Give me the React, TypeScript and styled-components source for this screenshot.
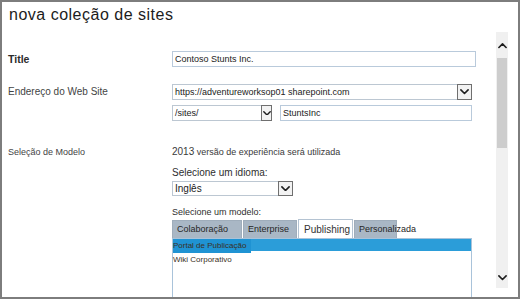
import React from 'react';
import styled, { createGlobalStyle } from 'styled-components';

const GlobalStyle = createGlobalStyle`
  html, body {
    margin: 0;
    padding: 0;
    background: #ffffff;
  }
  body {
    font-family: "Liberation Sans", Arial, sans-serif;
    color: #444;
  }
`;

const Chevron = ({ up = false, size = 9 }: { up?: boolean; size?: number }) => (
  <svg width={size} height={size * 0.6} viewBox="0 0 10 6">
    <path
      d={up ? 'M1 5 L5 1 L9 5' : 'M1 1 L5 5 L9 1'}
      fill="none"
      stroke="#1e1e1e"
      strokeWidth="1.8"
      strokeLinecap="round"
      strokeLinejoin="round"
    />
  </svg>
);

function App() {
  return (
    <>
      <GlobalStyle />
      <Frame>
        <Heading>nova coleção de sites</Heading>
        <Body>
          <Form>
            <Row top={19}>
              <Label bold>Title</Label>
              <Fields>
                <TextBox width={304}>Contoso Stunts Inc.</TextBox>
              </Fields>
            </Row>

            <Row top={17}>
              <Label>Endereço do Web Site</Label>
              <Fields>
                <Select width={300}>
                  <SelectText>https://adventureworksop01 sharepoint.com</SelectText>
                  <DropButton size={15}>
                    <Chevron />
                  </DropButton>
                </Select>
                <InlineRow>
                  <Select width={100}>
                    <SelectText>/sites/</SelectText>
                    <DropButton size={11}>
                      <Chevron size={8} />
                    </DropButton>
                  </Select>
                  <TextBox width={192}>StuntsInc</TextBox>
                </InlineRow>
              </Fields>
            </Row>

            <Row top={23}>
              <Label small>Seleção de Modelo</Label>
              <Fields>
                <Version>
                  <Year>2013</Year> versão de experiência será utilizada
                </Version>
                <FieldCaption top={6}>Selecione um idioma:</FieldCaption>
                <Select width={121} height={15} top={1}>
                  <SelectText big>Inglês</SelectText>
                  <DropButton size={15}>
                    <Chevron />
                  </DropButton>
                </Select>
                <FieldCaption top={9} small>
                  Selecione um modelo:
                </FieldCaption>
                <Tabs>
                  <Tab width={70}>Colaboração</Tab>
                  <Tab width={54}>Enterprise</Tab>
                  <Tab width={55} active>
                    Publishing
                  </Tab>
                  <Tab width={43}>Personalizada</Tab>
                </Tabs>
                <ListBox>
                  <ListItem selected>
                    <ItemText selected>Portal de Publicação</ItemText>
                  </ListItem>
                  <ListItem>
                    <ItemText>Wiki Corporativo</ItemText>
                  </ListItem>
                </ListBox>
              </Fields>
            </Row>
          </Form>

          <ScrollBar>
            <ScrollButton>
              <Chevron up />
            </ScrollButton>
            <Thumb />
            <Track />
            <ScrollButton>
              <Chevron />
            </ScrollButton>
          </ScrollBar>
        </Body>
      </Frame>
    </>
  );
}

const Frame = styled.div`
  width: 520px;
  height: 299px;
  box-sizing: border-box;
  border: 2px solid #7d7d7d;
  background: #fff;
  overflow: hidden;
  display: flex;
  flex-direction: column;
`;

const Heading = styled.h1`
  margin: 0;
  height: 30px;
  box-sizing: border-box;
  padding: 3px 0 0 7px;
  font-size: 16px;
  line-height: 20px;
  font-weight: normal;
  letter-spacing: 0.5px;
  color: #1c1c1c;
`;

const Body = styled.div`
  flex: 1;
  display: flex;
  overflow: hidden;
`;

const Form = styled.div`
  flex: 1;
  padding-left: 6px;
  overflow: hidden;
`;

const Row = styled.div<{ top: number }>`
  display: flex;
  align-items: flex-start;
  margin-top: ${(p) => p.top}px;
`;

const Label = styled.div<{ bold?: boolean; small?: boolean }>`
  width: 164px;
  flex-shrink: 0;
  font-size: ${(p) => (p.bold ? 10.5 : p.small ? 9 : 10)}px;
  font-weight: ${(p) => (p.bold ? 'bold' : 'normal')};
  line-height: 16px;
  color: ${(p) => (p.bold ? '#2b2b2b' : '#444')};
`;

const Fields = styled.div`
  width: 304px;
  display: flex;
  flex-direction: column;
  align-items: flex-start;
`;

const TextBox = styled.div<{ width: number }>`
  width: ${(p) => p.width}px;
  height: 16px;
  box-sizing: border-box;
  border: 1px solid #b9cadb;
  padding: 0 2px;
  font-size: 9px;
  line-height: 14px;
  color: #222;
  white-space: nowrap;
`;

const InlineRow = styled.div`
  display: flex;
  gap: 8px;
  margin-top: 5px;
`;

const Select = styled.div<{ width: number; height?: number; top?: number }>`
  width: ${(p) => p.width}px;
  height: ${(p) => p.height ?? 16}px;
  margin-top: ${(p) => p.top ?? 0}px;
  box-sizing: border-box;
  border: 1px solid #bcc7d2;
  display: flex;
  align-items: stretch;
`;

const SelectText = styled.div<{ big?: boolean }>`
  flex: 1;
  padding: 0 2px;
  font-size: ${(p) => (p.big ? 10 : 9)}px;
  line-height: 14px;
  color: #222;
  white-space: nowrap;
  overflow: hidden;
`;

const DropButton = styled.div<{ size: number }>`
  width: ${(p) => p.size}px;
  box-sizing: border-box;
  margin: -1px -1px -1px 0;
  border: 1px solid #6f6f6f;
  background: #f2f2f2;
  display: flex;
  align-items: center;
  justify-content: center;
`;

const Version = styled.div`
  font-size: 9px;
  line-height: 16px;
  color: #3a3a3a;
  white-space: nowrap;
`;

const Year = styled.span`
  font-size: 10px;
`;

const FieldCaption = styled.div<{ top: number; small?: boolean }>`
  margin-top: ${(p) => p.top}px;
  font-size: ${(p) => (p.small ? 9 : 10)}px;
  line-height: 14px;
  color: #2e2e2e;
  white-space: nowrap;
`;

const Tabs = styled.div`
  display: flex;
  align-items: flex-end;
  gap: 1px;
  height: 19px;
`;

const Tab = styled.div<{ width: number; active?: boolean }>`
  width: ${(p) => p.width}px;
  height: ${(p) => (p.active ? 19 : 18)}px;
  box-sizing: border-box;
  padding-left: ${(p) => (p.active ? 5 : 4)}px;
  background: ${(p) => (p.active ? '#ffffff' : '#a9b7c5')};
  border: 1px solid ${(p) => (p.active ? '#b4c3d2' : '#9fadbb')};
  border-bottom: none;
  font-size: ${(p) => (p.active ? 10 : 9)}px;
  line-height: ${(p) => (p.active ? 19 : 17)}px;
  color: ${(p) => (p.active ? '#333' : '#262626')};
  white-space: nowrap;
  overflow: visible;
`;

const ListBox = styled.div`
  width: 300px;
  height: 80px;
  box-sizing: border-box;
  border: 1px solid #a9c3da;
  background: #fff;
`;

const ListItem = styled.div<{ selected?: boolean }>`
  height: 12px;
  margin-bottom: 2px;
  background: ${(p) => (p.selected ? '#2b9dd9' : 'transparent')};
  display: flex;
`;

const ItemText = styled.span<{ selected?: boolean }>`
  height: 14px;
  padding: 0 5px 0 0;
  font-size: 8px;
  line-height: 13px;
  color: #3a3025;
  white-space: nowrap;
  background: ${(p) => (p.selected ? '#1f93d3' : 'transparent')};
`;

const ScrollBar = styled.div`
  width: 12px;
  height: 256px;
  margin-right: 10px;
  background: #f0f0f0;
  display: flex;
  flex-direction: column;
  align-items: center;
`;

const ScrollButton = styled.div`
  height: 24px;
  width: 100%;
  display: flex;
  align-items: center;
  justify-content: center;
  padding-top: 4px;
  box-sizing: border-box;
`;

const Thumb = styled.div`
  width: 10px;
  height: 90px;
  margin-top: 2px;
  background: #cdcdcd;
`;

const Track = styled.div`
  flex: 1;
`;

export default App;
